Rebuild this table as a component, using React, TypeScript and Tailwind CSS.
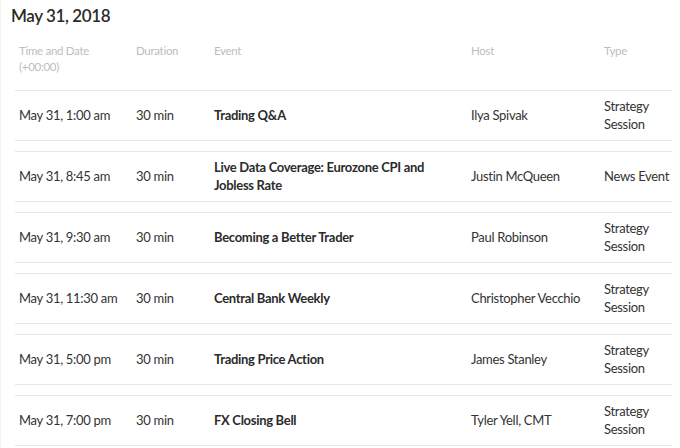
const rows = [
  { time: "May 31, 1:00 am", event: "Trading Q&A", host: "Ilya Spivak", type: "Strategy Session" },
  { time: "May 31, 8:45 am", event: "Live Data Coverage: Eurozone CPI and Jobless Rate", host: "Justin McQueen", type: "News Event" },
  { time: "May 31, 9:30 am", event: "Becoming a Better Trader", host: "Paul Robinson", type: "Strategy Session" },
  { time: "May 31, 11:30 am", event: "Central Bank Weekly", host: "Christopher Vecchio", type: "Strategy Session" },
  { time: "May 31, 5:00 pm", event: "Trading Price Action", host: "James Stanley", type: "Strategy Session" },
  { time: "May 31, 7:00 pm", event: "FX Closing Bell", host: "Tyler Yell, CMT", type: "Strategy Session" },
];

const cols = "grid grid-cols-[117px_78px_257px_133px_1fr] pl-[4px]";

export default function App() {
  return (
    <div className="w-[680px] h-[448px] bg-white overflow-hidden border-l border-[#f2f2f2] font-['Lato','Liberation_Sans',sans-serif] text-[#333]">
      <h1 className="pl-[10px] pt-[5px] text-[17px] leading-[22px] font-semibold tracking-[-0.4px] text-[#2b2b2b]">
        May 31, 2018
      </h1>
      <div className={`${cols} ml-[14px] mt-[15px] h-[48px] text-[11.5px] leading-[16px] tracking-[-0.3px] text-[#bdbdbd]`}>
        <div className="pt-[1px]">
          Time and Date
          <br />
          (+00:00)
        </div>
        <div className="pt-[1px]">Duration</div>
        <div className="pt-[1px]">Event</div>
        <div className="pt-[1px]">Host</div>
        <div className="pt-[1px]">Type</div>
      </div>
      <div className="ml-[14px] w-[657px]">
        {rows.map((r) => (
          <div
            key={r.time}
            className={`${cols} items-center h-[51px] mb-[10px] border-y border-[#e6e6e6] text-[13px] leading-[18px] tracking-[-0.3px]`}
          >
            <div className="-mt-[1px]">{r.time}</div>
            <div className="-mt-[1px]">30 min</div>
            <div className="-mt-[1px] font-bold text-[#2b2b2b] pr-[30px]">{r.event}</div>
            <div className="-mt-[1px]">{r.host}</div>
            <div className="-mt-[1px]">{r.type}</div>
          </div>
        ))}
      </div>
    </div>
  );
}
